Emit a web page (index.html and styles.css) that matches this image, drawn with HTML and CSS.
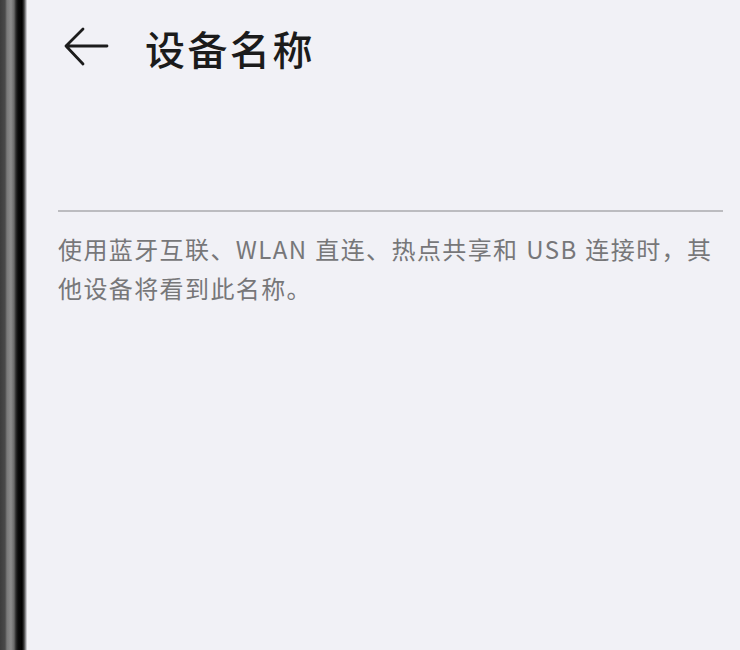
FILE: index.html
```html
<!DOCTYPE html>
<html lang="zh-CN">
<head>
<meta charset="utf-8">
<title>设备名称</title>
<link rel="stylesheet" href="styles.css">
</head>
<body>
<div class="frame">
  <div class="bezel"></div>
  <div class="screen">
    <header class="header">
      <svg class="back" width="46" height="42" viewBox="0 0 46 42" aria-hidden="true">
        <path d="M44 19 H3 M20 2 L3 19 L20 37" fill="none" stroke="#1c1c1c" stroke-width="2.8" stroke-linecap="round" stroke-linejoin="round"/>
      </svg>
      <h1 class="title">设备名称</h1>
    </header>
    <div class="field"></div>
    <p class="hint">使用蓝牙互联、WLAN 直连、热点共享和 USB 连接时，其他设备将看到此名称。</p>
  </div>
</div>
</body>
</html>
```

FILE: styles.css
```css
html, body {
  margin: 0;
  padding: 0;
  height: 100%;
  background: #f1f1f6;
}

.frame {
  display: flex;
  height: 650px;
  overflow: hidden;
}

.bezel {
  width: 27px;
  flex: none;
  background: linear-gradient(to right,
    #3c3c3c 0px, #4a4a4a 5px, #7a7a7a 7px, #8c8c8c 11px, #6a6a6a 14px,
    #2a2a2a 16px, #0c0c0c 18px, #000 22px, #3a3a3a 24px, #a8a8ac 26px, #e6e6ea 27px);
}

.screen {
  flex: 1;
  padding: 0 17px 0 31px;
  font-family: "Noto Sans CJK SC", "Noto Sans", sans-serif;
}

.header {
  display: flex;
  align-items: center;
  height: 42px;
  margin-top: 27px;
}

.back {
  margin-left: 5px;
  flex: none;
}

.title {
  margin: 0 0 0 36px;
  font-size: 40px;
  line-height: 42px;
  font-weight: 500;
  color: #1b1b1b;
  letter-spacing: 2.5px;
}

.field {
  height: 141px;
  border-bottom: 2px solid #bcbcc0;
}

.hint {
  margin: 17px 0 0;
  font-size: 24px;
  line-height: 39px;
  letter-spacing: 1.4px;
  word-spacing: 1px;
  color: #777779;
}
```
